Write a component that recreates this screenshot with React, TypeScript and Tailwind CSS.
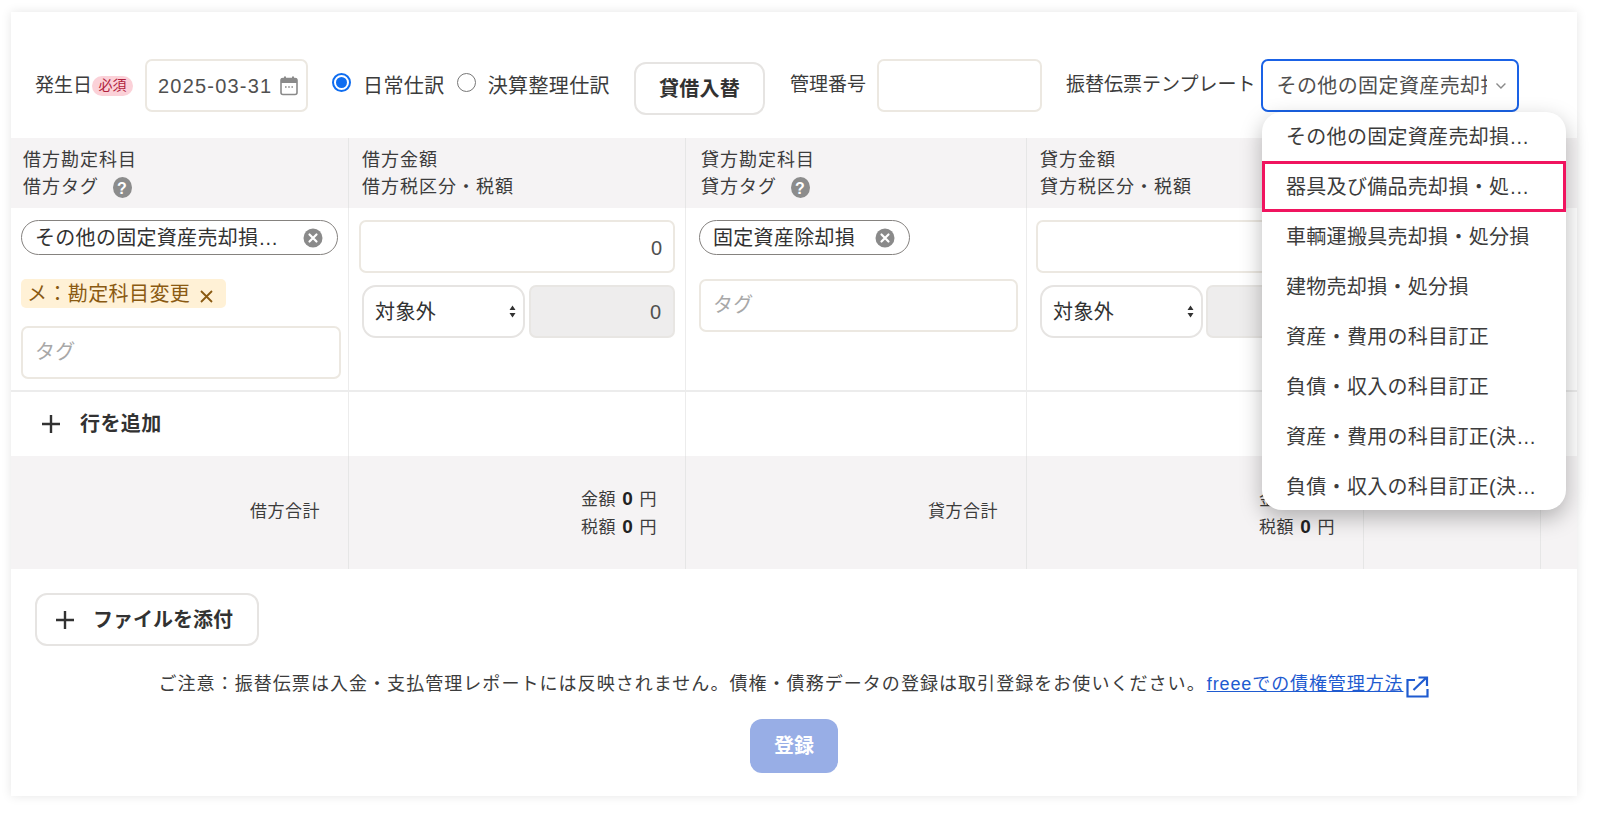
import React from "react";

const Question = () => (
  <svg width="19" height="21" viewBox="0 0 19 21" className="inline-block">
    <ellipse cx="9.5" cy="10.5" rx="9.5" ry="10.5" fill="#8c8c8c" />
    <text x="9.5" y="16.5" textAnchor="middle" fontSize="16" fontWeight="700" fill="#fff" fontFamily="Liberation Sans">?</text>
  </svg>
);

const ClearIcon = () => (
  <svg width="20" height="20" viewBox="0 0 20 20">
    <circle cx="10" cy="10" r="9.5" fill="#8a8a8a" />
    <path d="M6.5 6.5l7 7M13.5 6.5l-7 7" stroke="#fff" strokeWidth="2.2" strokeLinecap="round" />
  </svg>
);

const Plus = () => (
  <svg width="20" height="20" viewBox="0 0 20 20">
    <path d="M10 1v18M1 10h18" stroke="#323232" strokeWidth="2.4" />
  </svg>
);

const UpDown = () => (
  <svg width="7" height="13" viewBox="0 0 7 13">
    <path d="M3.5 0.5L6.5 5H0.5zM3.5 12.5L0.5 8H6.5z" fill="#323232" />
  </svg>
);

const Calendar = () => (
  <svg width="18" height="20" viewBox="0 0 18 20">
    <rect x="4" y="0.5" width="2" height="3" fill="#8a8a8a" />
    <rect x="12" y="0.5" width="2" height="3" fill="#8a8a8a" />
    <rect x="1" y="2.5" width="16" height="16" rx="2" fill="none" stroke="#8a8a8a" strokeWidth="1.6" />
    <rect x="1" y="2.5" width="16" height="4.5" fill="#8a8a8a" />
    <path d="M5 11h1.6M8.2 11h1.6M11.4 11h1.6" stroke="#8a8a8a" strokeWidth="1.4" />
  </svg>
);

const External = () => (
  <svg width="23" height="22" viewBox="0 0 23 22" fill="none" stroke="#1f5bd0" strokeWidth="2.2">
    <path d="M9 4H1.5v16.5h20V13" />
    <path d="M7.5 14L20 2M12.5 1.5h8.5v8.5" />
  </svg>
);

const Chip = ({ label, w }: { label: string; w: string }) => (
  <div className={`flex h-[35px] items-center justify-between rounded-full border border-[#85827f] pl-[13px] pr-[14px] text-[20px] text-[#323232] ${w}`}>
    <span className="tracking-[0.3px]">{label}</span>
    <ClearIcon />
  </div>
);

const TextBox = ({ w, value, placeholder }: { w: string; value?: string; placeholder?: string }) => (
  <div className={`flex h-[53px] items-center rounded-[7px] border-2 border-[#ece8e1] bg-white text-[20px] ${w} ${value ? "justify-end pr-[11px]" : "justify-start pl-[12px]"}`}>
    {value && <span className="mt-[2px] text-[#505050]">{value}</span>}
    {placeholder && <span className="-mt-[2px] tracking-[0.3px] text-[#a8a8a8]">{placeholder}</span>}
  </div>
);

const TaxSelect = ({ w }: { w: string }) => (
  <div className={`flex h-[53px] items-center justify-between rounded-[14px] border-2 border-[#e6e4e2] bg-white pl-[11px] pr-[7px] text-[20px] text-[#323232] ${w}`}>
    <span className="tracking-[0.4px]">対象外</span>
    <UpDown />
  </div>
);

const GrayBox = ({ w }: { w: string }) => (
  <div className={`flex h-[53px] items-center justify-end rounded-[7px] border-2 border-[#e8e6e3] bg-[#eeeded] pr-[12px] text-[20px] text-[#505050] ${w}`}>
    <span className="mt-[1px]">0</span>
  </div>
);

const HeaderCell = ({ a, b, q, last, pad }: { a?: string; b?: string; q?: boolean; last?: boolean; pad: string }) => (
  <div className={`flex h-[70px] flex-col justify-center bg-[#f5f3f4] pt-[2px] text-[18px] leading-[27px] tracking-[1px] text-[#3c3c3c] ${pad} ${last ? "" : "border-r border-[#e6e6e6]"}`}>
    <div>{a}</div>
    <div className="flex items-center gap-[14px]">
      {b}
      {q && <Question />}
    </div>
  </div>
);

const TotalLabel = ({ label }: { label: string }) => (
  <div className="flex h-[113px] items-center justify-end border-r border-[#e6e6e6] bg-[#f5f3f4] pb-[2px] pr-[28px] text-[17px] tracking-[0.5px] text-[#3c3c3c]">
    {label}
  </div>
);

const TotalValue = () => (
  <div className="flex h-[113px] flex-col items-end justify-center border-r border-[#e6e6e6] bg-[#f5f3f4] pr-[28px] text-[17px] leading-[27px] tracking-[0.5px] text-[#3c3c3c]">
    <div>
      金額 <b className="mx-[1px] text-[19px] text-[#222]">0</b> 円
    </div>
    <div>
      税額 <b className="mx-[1px] text-[19px] text-[#222]">0</b> 円
    </div>
  </div>
);

const menu = [
  "その他の固定資産売却損…",
  "器具及び備品売却損・処…",
  "車輌運搬具売却損・処分損",
  "建物売却損・処分損",
  "資産・費用の科目訂正",
  "負債・収入の科目訂正",
  "資産・費用の科目訂正(決…",
  "負債・収入の科目訂正(決…",
];

export default function App() {
  return (
    <div className="h-[816px] w-[1600px] overflow-hidden bg-white pl-[11px] pt-[12px] font-['Liberation_Sans','Noto_Sans_CJK_JP',sans-serif]">
      <div className="relative h-[784px] w-[1566px] bg-white shadow-[0_0_10px_rgba(0,0,0,0.1)]">
        {/* toolbar */}
        <div className="flex h-[126px] items-start pl-[24px] pt-[47px] text-[19px] text-[#3c3c3c]">
          <div className="flex h-[53px] items-center">
            <span className="mt-[2px]">発生日</span>
            <span className="flex h-[20px] w-[41px] items-center justify-center rounded-full bg-[#fbd1d8] text-[14px] text-[#b0213c]">必須</span>
          </div>
          <div className="ml-[12px] flex h-[53px] w-[163px] items-center justify-between rounded-[7px] border-2 border-[#ece8e1] pl-[11px] pr-[8px]">
            <span className="mt-[1px] text-[20px] tracking-[1.2px] text-[#505050]">2025-03-31</span>
            <Calendar />
          </div>
          <div className="ml-[24px] flex h-[53px] items-center text-[20px]">
            <span className="-mt-[6px] flex h-[19px] w-[19px] items-center justify-center rounded-full border-2 border-[#0f6df0]">
              <span className="h-[11px] w-[11px] rounded-full bg-[#0f6df0]" />
            </span>
            <span className="ml-[12px] mt-[1px] tracking-[0.4px]">日常仕訳</span>
            <span className="-mt-[6px] ml-[12px] h-[19px] w-[19px] rounded-full border border-[#777]" />
            <span className="ml-[12px] mt-[1px] tracking-[0.4px]">決算整理仕訳</span>
          </div>
          <button className="ml-[24px] mt-[3px] h-[53px] w-[131px] rounded-[12px] border-2 border-[#e6e4e2] bg-white text-[20px] font-bold tracking-[0.3px] text-[#323232]">
            貸借入替
          </button>
          <div className="ml-[25px] flex h-[53px] items-center">管理番号</div>
          <div className="ml-[11px] h-[53px] w-[165px] rounded-[7px] border-2 border-[#ece8e1]" />
          <div className="ml-[24px] flex h-[53px] items-center">振替伝票テンプレート</div>
          <div className="ml-[6px] flex h-[53px] w-[258px] items-center rounded-[7px] border-2 border-[#1a62e6] pl-[13px] pr-[11px] text-[20px]">
            <span className="w-[212px] overflow-hidden whitespace-nowrap tracking-[0.4px] text-[#505050]">その他の固定資産売却損</span>
            <svg width="12" height="8" viewBox="0 0 12 8" className="ml-[8px]">
              <path d="M1.5 1.5L6 6l4.5-4.5" fill="none" stroke="#8a8a8a" strokeWidth="1.4" />
            </svg>
          </div>
        </div>

        {/* table */}
        <div className="grid grid-cols-[338px_337px_341px_337px_177px_36px]">
          <HeaderCell pad="pl-[12px]" a="借方勘定科目" b="借方タグ" q />
          <HeaderCell pad="pl-[13px]" a="借方金額" b="借方税区分・税額" />
          <HeaderCell pad="pl-[15px]" a="貸方勘定科目" b="貸方タグ" q />
          <HeaderCell pad="pl-[13px]" a="貸方金額" b="貸方税区分・税額" />
          <HeaderCell pad="pl-[12px]" />
          <HeaderCell pad="pl-[12px]" last />

          <div className="h-[184px] border-b-2 border-r border-[#ececec] pl-[10px] pt-[12px]">
            <Chip label="その他の固定資産売却損…" w="w-[317px]" />
            <div className="mt-[24px] flex h-[29px] w-[205px] items-center rounded-[5px] bg-[#fff1d6] pl-[6px] text-[20px] tracking-[0.4px] text-[#8a5a12]">
              <span className="mt-[1px]">メ：勘定科目変更</span>
              <svg width="15" height="15" viewBox="0 0 15 15" className="ml-[9px] mt-[5px]">
                <path d="M2 2l11 11M13 2L2 13" stroke="#8a5a12" strokeWidth="1.8" />
              </svg>
            </div>
            <div className="mt-[18px]">
              <TextBox w="w-[320px]" placeholder="タグ" />
            </div>
          </div>
          <div className="h-[184px] border-b-2 border-r border-[#ececec] pl-[10px] pt-[12px]">
            <TextBox w="w-[316px]" value="0" />
            <div className="ml-[3px] mt-[12px] flex gap-[4px]">
              <TaxSelect w="w-[163px]" />
              <GrayBox w="w-[146px]" />
            </div>
          </div>
          <div className="h-[184px] border-b-2 border-r border-[#ececec] pl-[13px] pt-[12px]">
            <Chip label="固定資産除却損" w="w-[211px]" />
            <div className="mt-[24px]">
              <TextBox w="w-[319px]" placeholder="タグ" />
            </div>
          </div>
          <div className="h-[184px] border-b-2 border-r border-[#ececec] pl-[9px] pt-[12px]">
            <TextBox w="w-[316px]" value="0" />
            <div className="ml-[4px] mt-[12px] flex gap-[3px]">
              <TaxSelect w="w-[163px]" />
              <GrayBox w="w-[146px]" />
            </div>
          </div>
          <div className="h-[184px] border-b-2 border-r border-[#ececec]" />
          <div className="h-[184px] border-b-2 border-[#ececec]" />

          <div className="flex h-[64px] items-center border-r border-[#ececec] pl-[30px] text-[20px] font-bold tracking-[0.4px] text-[#323232]">
            <Plus />
            <span className="ml-[19px]">行を追加</span>
          </div>
          <div className="h-[64px] border-r border-[#ececec]" />
          <div className="h-[64px] border-r border-[#ececec]" />
          <div className="h-[64px] border-r border-[#ececec]" />
          <div className="h-[64px] border-r border-[#ececec]" />
          <div className="h-[64px]" />

          <TotalLabel label="借方合計" />
          <TotalValue />
          <TotalLabel label="貸方合計" />
          <TotalValue />
          <div className="h-[113px] border-r border-[#e6e6e6] bg-[#f5f3f4]" />
          <div className="h-[113px] bg-[#f5f3f4]" />
        </div>

        {/* footer */}
        <div className="pl-[24px] pt-[24px]">
          <button className="flex h-[53px] w-[224px] items-center rounded-[12px] border-2 border-[#e6e4e2] bg-white pl-[18px] text-[20px] font-bold text-[#323232]">
            <Plus />
            <span className="ml-[18px]">ファイルを添付</span>
          </button>
        </div>
        <div className="mt-[25px] flex items-start justify-center text-[18px] tracking-[1.05px] text-[#3c3c3c]">
          <span>ご注意：振替伝票は入金・支払管理レポートには反映されません。債権・債務データの登録は取引登録をお使いください。</span>
          <a className="ml-[1px] tracking-[0.9px] text-[#1f5bd0] underline">freeeでの債権管理方法</a>
          <span className="ml-[3px] mt-[5px]">
            <External />
          </span>
        </div>
        <div className="mt-[21px] flex justify-center">
          <button className="h-[54px] w-[88px] rounded-[12px] bg-[#98aee6] text-[20px] font-bold text-white">登録</button>
        </div>

        {/* dropdown */}
        <div className="absolute left-[1251px] top-[100px] h-[398px] w-[304px] overflow-hidden rounded-[20px] bg-white shadow-[0_8px_22px_rgba(0,0,0,0.28)]">
          {menu.map((m, i) => (
            <div
              key={m}
              className={`flex items-center whitespace-nowrap text-[20px] tracking-[0.3px] text-[#3c3c3c] ${i === 1 ? "-mt-[1px] h-[51px] border-[3px] border-[#f0145f] pl-[21px]" : "h-[50px] pl-[24px]"}`}
            >
              {m}
            </div>
          ))}
        </div>
      </div>
    </div>
  );
}
